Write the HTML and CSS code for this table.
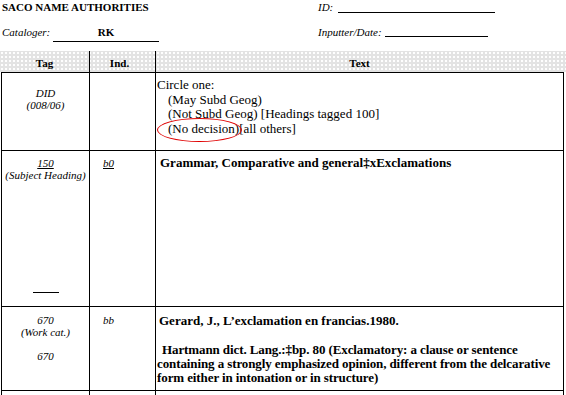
FILE: index.html
```html
<!DOCTYPE html>
<html>
<head>
<meta charset="utf-8">
<title>SACO Name Authorities</title>
<link rel="stylesheet" href="styles.css">
</head>
<body>
<div class="page">
  <div class="top">
    <div class="line l1">
      <div class="title">SACO NAME AUTHORITIES</div>
      <div class="field"><span class="lab">ID:</span><span class="blank b-id"></span></div>
    </div>
    <div class="line l2">
      <div class="field"><span class="lab lab-cat">Cataloger:</span><span class="blank b-cat">RK</span></div>
      <div class="field"><span class="lab">Inputter/Date:</span><span class="blank b-inp"></span></div>
    </div>
  </div>

  <div class="thead">
    <div class="th c1">Tag</div>
    <div class="th c2">Ind.</div>
    <div class="th c3">Text</div>
  </div>

  <div class="rows">
    <div class="row r1">
      <div class="cell tag">DID<br>(008/06)</div>
      <div class="cell ind"></div>
      <div class="cell txt">
        <div>Circle one:</div>
        <div class="opt">(May Subd Geog)</div>
        <div class="opt">(Not Subd Geog) [Headings tagged 100]</div>
        <div class="opt"><span class="circled">(No decision)</span>[all others]</div>
      </div>
    </div>
    <div class="row r2">
      <div class="cell tag"><u>150</u><br>(Subject Heading)<span class="rule"></span></div>
      <div class="cell ind"><u>b0</u></div>
      <div class="cell txt bold">Grammar, Comparative and general‡xExclamations</div>
    </div>
    <div class="row r3">
      <div class="cell tag">670<br>(Work cat.)<br><br>670</div>
      <div class="cell ind">bb</div>
      <div class="cell txt bold">
        <div>Gerard, J., L’exclamation en francias.1980.</div>
        <div class="gap"></div>
        <div class="p2">Hartmann dict. Lang.:‡bp. 80 (Exclamatory: a clause or sentence<br>containing a strongly emphasized opinion, different from the delcarative<br>form either in intonation or in structure)</div>
      </div>
    </div>
    <div class="row r4">
      <div class="cell tag"></div>
      <div class="cell ind"></div>
      <div class="cell txt"></div>
    </div>
  </div>
</div>
</body>
</html>
```

FILE: styles.css
```css
* { box-sizing: border-box; }
html, body { margin: 0; padding: 0; background: #fff; }
body {
  width: 566px;
  height: 395px;
  overflow: hidden;
  font-family: "Liberation Serif", "Times New Roman", serif;
  color: #000;
}

/* ---------- top form ---------- */
.top { height: 51px; padding: 1px 0 0 2px; font-size: 11px; line-height: 13px; }
.line { display: grid; grid-template-columns: 316px auto; }
.l1 { height: 25px; }
.title { font-weight: bold; }
.field { white-space: nowrap; }
.lab { font-style: italic; }
.lab-cat { display: inline-block; width: 51px; }
.blank {
  display: inline-block;
  vertical-align: baseline;
  border-bottom: 1px solid #000;
  height: 10px;
}
.b-id { width: 157px; margin-left: 5px; margin-bottom: -2px; }
.b-cat { width: 106px; text-align: center; font-weight: bold; height: auto; padding-bottom: 2px; }
.b-inp { width: 103px; margin-left: 3px; margin-bottom: -1px; }

/* ---------- table header ---------- */
.thead {
  display: grid;
  grid-template-columns: 90px 66px 1fr;
  height: 21px;
  background-color: #e3e3e3;
  background-image: radial-gradient(circle, #ffffff 0.7px, rgba(255,255,255,0) 0.9px);
  background-size: 4px 4px;
  font-size: 11px;
  font-weight: bold;
  line-height: 13px;
}
.th { text-align: center; padding-top: 6px; }
.th.c1, .th.c2 { border-right: 1px solid #000; }
.th.c2 { padding-right: 6px; }
.th.c3 { padding-left: 2px; padding-right: 5px; }

/* ---------- table body ---------- */
.rows { margin-left: 1px; width: 563px; border-top: 1px solid #000; }
.row { display: grid; grid-template-columns: 89px 66px 408px; }
.cell { border-right: 1px solid #000; border-bottom: 1px solid #000; }
.cell.tag { border-left: 1px solid #000; }
.r1 { height: 78px; }
.r2 { height: 156px; }
.r3 { height: 84px; }
.r4 { height: 40px; }

.tag {
  display: block;
  font-size: 11px;
  font-style: italic;
  line-height: 12px;
  text-align: center;
}
.ind { font-size: 11px; font-style: italic; line-height: 12px; padding-left: 13px; }
.r1 .tag { padding-top: 14px; }
.r2 .tag, .r2 .ind { padding-top: 6px; }
.r3 .tag, .r3 .ind { padding-top: 7px; }
.r2 .tag { position: relative; }
.rule {
  position: absolute;
  left: 31px;
  bottom: 13px;
  width: 26px;
  border-top: 1px solid #000;
}

.txt { font-size: 13px; line-height: 14.7px; }
.r1 .txt { padding: 5px 0 0 1px; }
.opt { padding-left: 11px; }
.circled { position: relative; }
.circled::before {
  content: "";
  position: absolute;
  left: -11px;
  right: -3px;
  top: -3px;
  bottom: -6px;
  border: 1px solid #e00000;
  border-radius: 50%;
}
.bold { font-weight: bold; }
.r2 .txt { padding: 5px 0 0 4px; }
.r3 .txt { padding: 7px 0 0 3px; line-height: 14.3px; }
.gap { height: 14.3px; }
.p2 { margin-left: -2px; text-indent: 5px; white-space: nowrap; letter-spacing: -0.1px; }
```
